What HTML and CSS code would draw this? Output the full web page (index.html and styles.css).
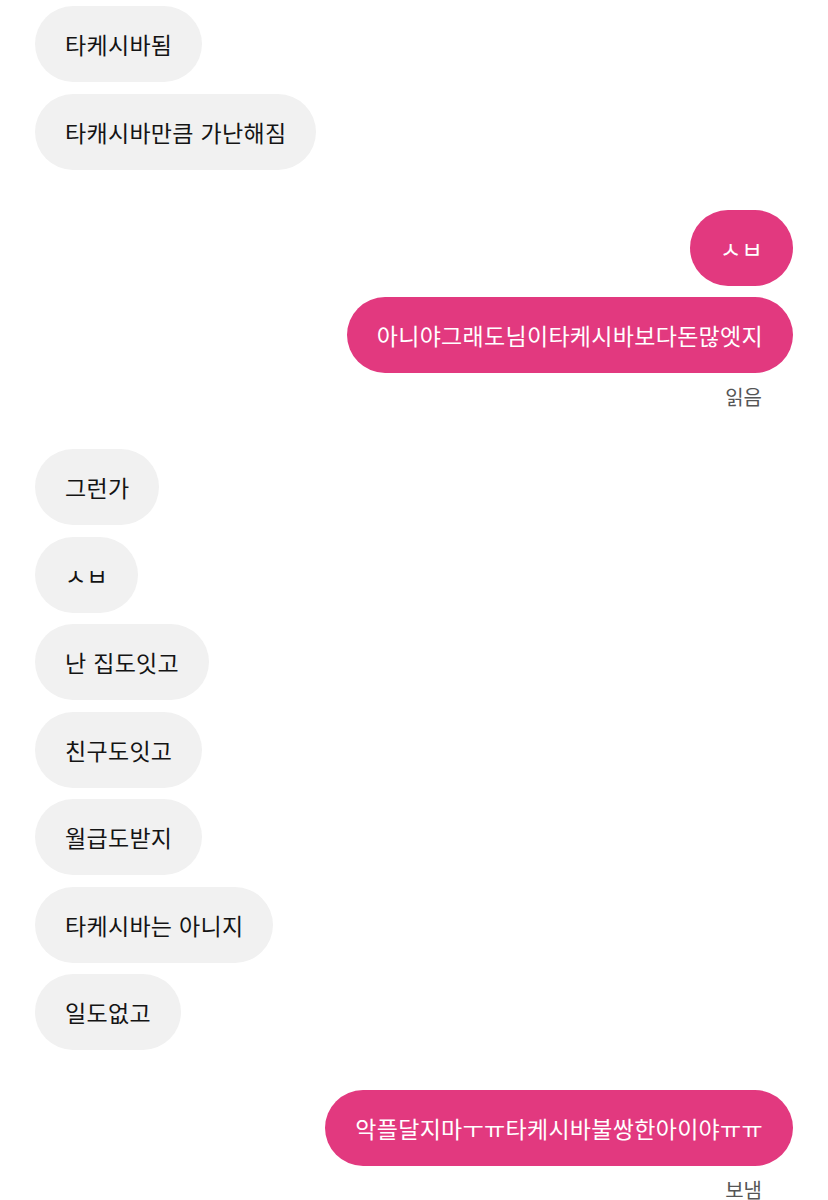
FILE: index.html
```html
<!DOCTYPE html>
<html lang="ko">
<head>
    <meta charset="UTF-8">
    <title>채팅</title>
    <link rel="stylesheet" href="styles.css">
</head>
<body>
<div class="chat">
    <div class="group">
        <div class="msg in">타케시바됨</div>
        <div class="msg in">타캐시바만큼 가난해짐</div>
    </div>
    <div class="group">
        <div class="msg out">ㅅㅂ</div>
        <div class="msg out">아니야그래도님이타케시바보다돈많엣지</div>
        <div class="receipt">읽음</div>
    </div>
    <div class="group">
        <div class="msg in">그런가</div>
        <div class="msg in">ㅅㅂ</div>
        <div class="msg in">난 집도잇고</div>
        <div class="msg in">친구도잇고</div>
        <div class="msg in">월급도받지</div>
        <div class="msg in">타케시바는 아니지</div>
        <div class="msg in">일도없고</div>
    </div>
    <div class="group">
        <div class="msg out">악플달지마ㅜㅠ타케시바불쌍한아이야ㅠㅠ</div>
        <div class="receipt">보냄</div>
    </div>
</div>
</body>
</html>
```

FILE: styles.css
```css
*{
    margin: 0;
    padding: 0;
    box-sizing: border-box;
}
html,body{
    width: 100%;
    height: 100%;
}
body{
    background: #ffffff;
    font-family: "Noto Sans CJK KR", "Noto Sans", sans-serif;
    color: #141414;
    overflow: hidden;
}
.chat{
    display: flex;
    flex-direction: column;
    gap: 40px;
    padding: 6px 35px 0 35px;
}
.group{
    display: flex;
    flex-direction: column;
    gap: 11.5px;
}
.msg{
    height: 76px;
    padding: 0 30px;
    border-radius: 38px;
    font-size: 23px;
    letter-spacing: 0.3px;
    line-height: 76px;
    white-space: nowrap;
}
.in{
    align-self: flex-start;
    background: #f1f1f1;
}
.out{
    align-self: flex-end;
    background: #e2397f;
    color: #ffffff;
}
.receipt{
    align-self: flex-end;
    margin-right: 31px;
    margin-top: 0.5px;
    font-size: 20px;
    line-height: 24px;
    color: #555555;
}
```
